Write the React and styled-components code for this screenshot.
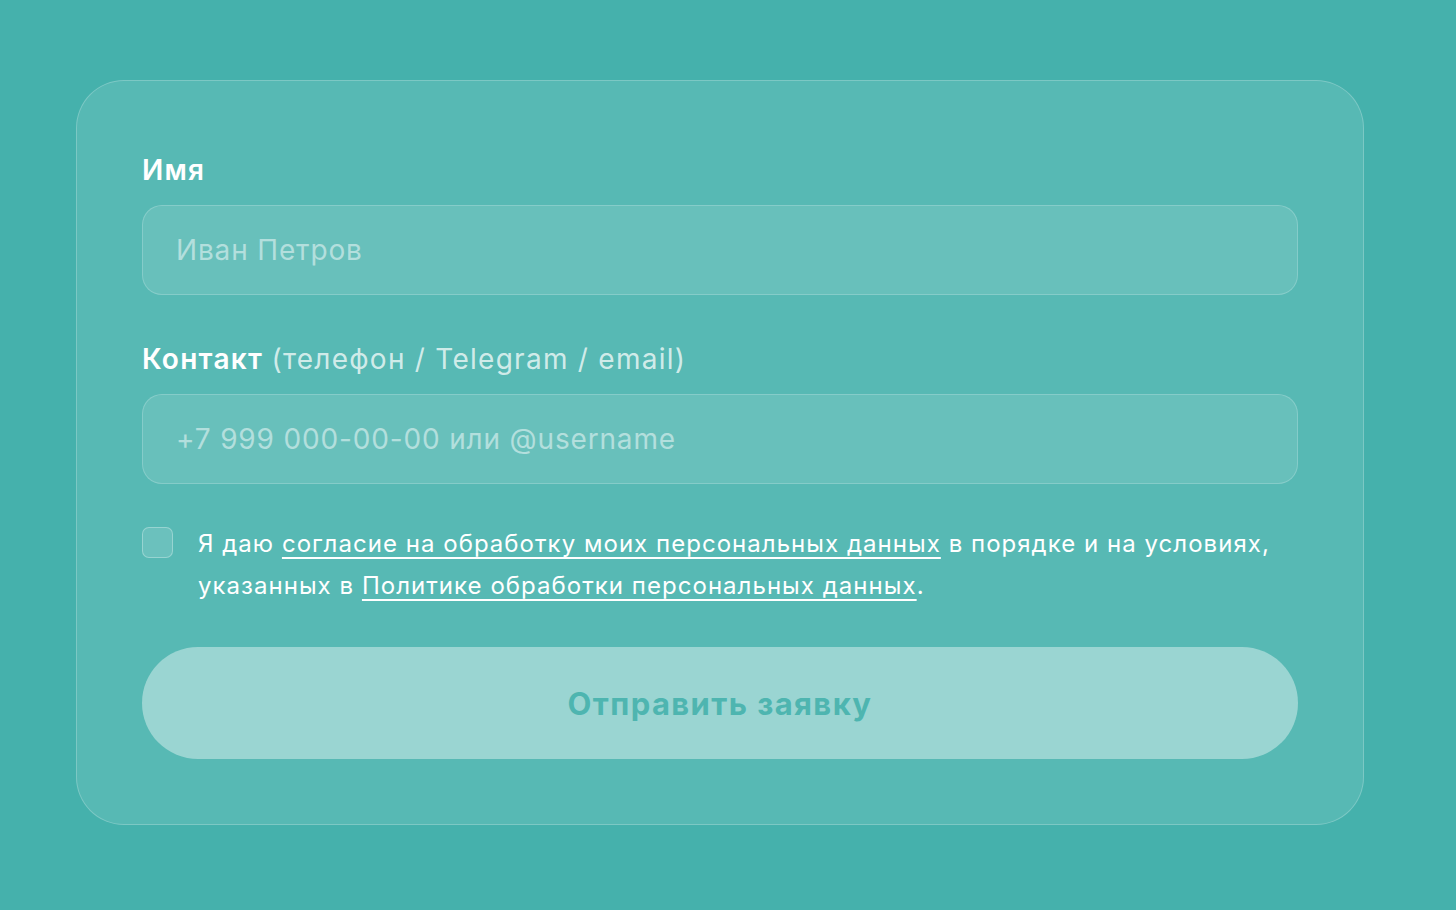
import React from "react";
import styled, { createGlobalStyle } from "styled-components";

const Global = createGlobalStyle`
  html, body { margin: 0; padding: 0; }
  body {
    background: #45b1ac;
    font-family: Inter, "Noto Sans", sans-serif;
    -webkit-font-smoothing: antialiased;
  }
`;

const Page = styled.main`
  min-height: 910px;
  box-sizing: border-box;
  padding: 80px 92px 85px 76px;
`;

const Card = styled.form`
  box-sizing: border-box;
  border: 1.5px solid rgba(255, 255, 255, 0.22);
  border-radius: 48px;
  background: rgba(255, 255, 255, 0.1);
  padding: 72px 65px 65px 65px;
  display: flex;
  flex-direction: column;
`;

const Field = styled.div`
  display: flex;
  flex-direction: column;
  gap: 18px;
  margin-bottom: ${(p) => p.$mb || 0}px;
`;

const Label = styled.label`
  font-size: 28px;
  font-weight: 600;
  letter-spacing: 0.045em;
  color: #ffffff;
  line-height: 34px;
`;

const Hint = styled.span`
  font-weight: 400;
  color: rgba(255, 255, 255, 0.74);
`;

const Input = styled.input`
  box-sizing: border-box;
  height: 90px;
  width: 100%;
  padding: 0 33px;
  border-radius: 20px;
  border: 1.5px solid rgba(255, 255, 255, 0.2);
  background: rgba(255, 255, 255, 0.1);
  font-family: inherit;
  font-size: 28px;
  letter-spacing: 0.03em;
  color: #ffffff;
  outline: none;
  &::placeholder {
    color: rgba(255, 255, 255, 0.5);
  }
`;

const Consent = styled.div`
  display: flex;
  gap: 25px;
  align-items: flex-start;
  margin-top: 39px;
  margin-bottom: 40px;
`;

const Box = styled.span`
  flex: none;
  box-sizing: border-box;
  width: 31px;
  height: 31px;
  margin-top: 4px;
  border-radius: 7px;
  border: 1.5px solid rgba(255, 255, 255, 0.3);
  background: rgba(255, 255, 255, 0.12);
`;

const ConsentText = styled.p`
  margin: 0;
  font-size: 24px;
  letter-spacing: 0.043em;
  line-height: 42px;
  color: #ffffff;
`;

const Link = styled.a`
  color: #ffffff;
  text-decoration: underline;
  text-underline-offset: 5px;
  text-decoration-thickness: 1.5px;
`;

const Submit = styled.button`
  height: 112px;
  width: 100%;
  border: none;
  border-radius: 56px;
  background: rgba(255, 255, 255, 0.4);
  color: #4eb5b0;
  font-family: inherit;
  font-size: 31px;
  font-weight: 700;
  letter-spacing: 0.045em;
  cursor: pointer;
`;

export default function App() {
  return (
    <>
      <Global />
      <Page>
        <Card onSubmit={(e) => e.preventDefault()}>
          <Field $mb={47}>
            <Label htmlFor="name">Имя</Label>
            <Input id="name" placeholder="Иван Петров" />
          </Field>
          <Field>
            <Label htmlFor="contact">
              Контакт <Hint>(телефон / Telegram / email)</Hint>
            </Label>
            <Input id="contact" placeholder="+7 999 000-00-00 или @username" />
          </Field>
          <Consent>
            <Box />
            <ConsentText>
              Я даю <Link href="#">согласие на обработку моих персональных данных</Link> в порядке и на условиях,
              указанных в <Link href="#">Политике обработки персональных данных</Link>.
            </ConsentText>
          </Consent>
          <Submit type="submit">Отправить заявку</Submit>
        </Card>
      </Page>
    </>
  );
}
